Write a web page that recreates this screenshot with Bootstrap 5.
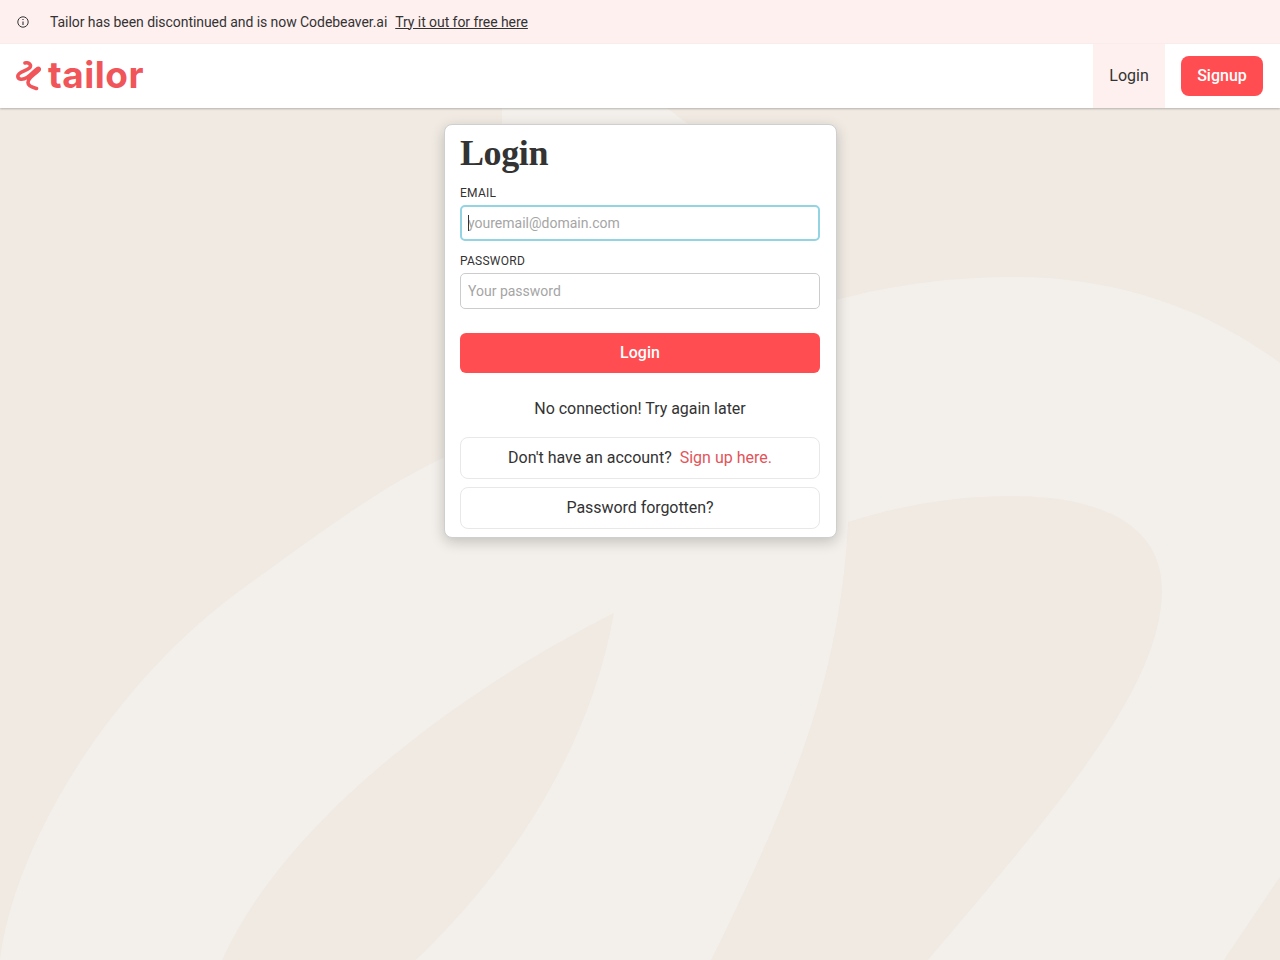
<!DOCTYPE html>
<html lang="en">
<head>
<meta charset="utf-8">
<title>Tailor Login</title>
<link href="https://cdn.jsdelivr.net/npm/bootstrap@5.3.0/dist/css/bootstrap.min.css" rel="stylesheet">
<style>
html,body{height:100%}
body{font-family:Roboto,"Liberation Sans",sans-serif;background:#f0eae3;color:#333;overflow:hidden;position:relative}
.bg-art{position:absolute;inset:0;width:100%;height:100%;z-index:0}
.page-wrap{position:relative;z-index:1}
.notice-bar{height:44px;background:#fff0f0;font-size:14px;padding-left:17px;color:#333;letter-spacing:-.06px}
.notice-bar svg{margin-right:21px}
.notice-bar a{color:#333;margin-left:8px}
.top-nav{height:64px;background:#fff;box-shadow:0 1px 2px rgba(0,0,0,.25);padding:0 17px 0 16px}
.brand-word{font-family:Inter,sans-serif;font-weight:700;font-size:37px;letter-spacing:.5px;line-height:1;color:#f0555a;margin:-4px 0 0 7px}
.nav-login{height:64px;width:72px;background:#fdf0ef;color:#333;font-size:16px;text-decoration:none}
.btn-signup{width:82px;height:40px;margin-left:16px;background:#ff4d52;color:#fff;border:0;border-radius:8px;font-size:16px;font-weight:500;padding:0}
.login-box{width:393px;margin:16px auto 0;background:#fff;border:1px solid #cfcfcf;border-radius:8px;padding:0 15.500px 8px;box-shadow:0 4px 14px rgba(0,0,0,.2);height:414px}
.login-title{font-family:"Liberation Serif",serif;font-weight:700;font-size:36px;line-height:56px;height:56px;margin:0 0 5px;color:#333;letter-spacing:-.4px}
.field-label{display:block;font-size:12px;line-height:14px;letter-spacing:.25px;color:#333;margin-bottom:5px;text-transform:uppercase}
.input-wrap{position:relative}
.fake-caret{position:absolute;left:8px;top:10px;width:1px;height:16px;background:#333}
.field-input{height:36px;border:1px solid #ccc;border-radius:5px;padding:0 7px;font-size:14px;color:#333;box-shadow:none}
.field-input:focus{border:2px solid #93d4e2;box-shadow:none;padding:0 6px}
.field-input::placeholder{color:#a5a5a5}
.field-block{margin-bottom:13px}
.btn-login{height:40px;background:#ff4d52;color:#fff;border:0;border-radius:6px;font-size:16px;font-weight:500;margin-top:11px;padding:0}
.status-msg{font-size:16px;line-height:24px;margin:24px 0 16px;text-align:center;color:#333;letter-spacing:-.03px}
.alt-row{height:42px;border:1px solid #e8e8e8;border-radius:8px;font-size:16px;color:#333;background:#fff;margin-bottom:8px}
.alt-row a{color:#e2545a;text-decoration:none;margin-left:8px}
.alt-tight{letter-spacing:-.06px}
</style>
</head>
<body>
<svg class="bg-art" viewBox="0 0 1280 960" preserveAspectRatio="none" aria-hidden="true">
<path fill="#f3f0eb" d="M0 960C15 840 115 680 245 587C305 544 375 490 443 458L640 340L836 300C900 283 960 277 1015 277C1100 277 1195 300 1280 363V877L1224 960Z"/>
<path fill="#f3f0eb" d="M502 108H667L688 124V300H502Z"/>
<path fill="#f0eae3" d="M614 613C480 680 290 810 222 960H416C510 870 590 750 614 613Z"/>
<path fill="#f0eae3" d="M848 522C900 505 960 495 1015 496C1110 497 1162 530 1162 590C1162 690 1050 815 928 960H711C790 800 840 680 848 522Z"/>
<path fill="#f0eae3" d="M1280 877V960H1224Z"/>
</svg>
<div class="page-wrap">
  <div class="notice-bar d-flex align-items-center">
    <svg width="12" height="12" viewBox="0 0 12 12" fill="none" stroke="#333" aria-hidden="true"><circle cx="6" cy="6" r="5.200" stroke-width="1"/><path d="M6 5.400V9" stroke-width="1.100"/><path d="M6 3V4" stroke-width="1.200"/></svg>
    <span>Tailor has been discontinued and is now Codebeaver.ai</span>
    <a href="#">Try it out for free here</a>
  </div>
  <nav class="top-nav d-flex align-items-center">
    <a href="#" class="d-flex align-items-center text-decoration-none">
      <svg width="25" height="30" viewBox="0 0 25 30" fill="none" stroke="#f0555a" stroke-width="3.600" stroke-linecap="round" stroke-linejoin="round" aria-hidden="true"><path d="M9 2C13 1 16 4 13.500 7C10 10 2 11 1.800 15C1.800 19 7 19 11 16.500C15 14 18 10 21 8C23 6.500 24 8 22.500 9.500C18 14 12 17 12 21.500C12 25.500 17 26.500 20.500 27.500"/></svg>
      <span class="brand-word">tailor</span>
    </a>
    <div class="ms-auto d-flex align-items-center">
      <a href="#" class="nav-login d-flex align-items-center justify-content-center">Login</a>
      <button class="btn-signup" type="button">Signup</button>
    </div>
  </nav>
  <main>
    <div class="login-box">
      <h1 class="login-title">Login</h1>
      <form onsubmit="return false">
        <div class="field-block">
          <label class="field-label" for="em">Email</label>
          <div class="input-wrap">
            <input id="em" class="form-control field-input" type="email" placeholder="youremail@domain.com" autofocus>
            <span class="fake-caret"></span>
          </div>
        </div>
        <div class="field-block">
          <label class="field-label" for="pw">Password</label>
          <input id="pw" class="form-control field-input" type="password" placeholder="Your password">
        </div>
        <button class="btn btn-login w-100" type="submit">Login</button>
      </form>
      <p class="status-msg">No connection! Try again later</p>
      <div class="alt-row d-flex align-items-center justify-content-center">Don't have an account? <a href="#">Sign up here.</a></div>
      <div class="alt-row alt-tight d-flex align-items-center justify-content-center">Password forgotten?</div>
    </div>
  </main>
</div>
</body>
</html>
